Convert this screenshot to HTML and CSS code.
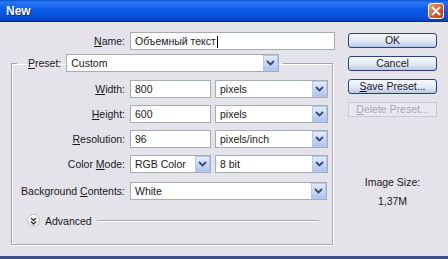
FILE: index.html
```html
<!DOCTYPE html>
<html lang="en">
<head>
    <title>New</title>
    <meta charset="UTF-8">
    <link rel="stylesheet" href="styles.css">
</head>
<body>
<div class="window">
    <div class="titlebar">
        <span class="title">New</span>
        <span class="close">
            <svg width="10" height="10" viewBox="0 0 10 10"><path d="M1 1 L9 9 M9 1 L1 9" stroke="#fff" stroke-width="2" fill="none"/></svg>
        </span>
    </div>
    <div class="content">
        <div class="main">
            <div class="name-row">
                <label class="label name-label"><u>N</u>ame:</label>
                <div class="field name-field">Объемный текст<span class="caret"></span></div>
            </div>
            <fieldset class="group">
                <legend class="preset">
                    <label class="label"><u>P</u>reset:</label>
                    <div class="field select preset-select">Custom<span class="arrow"><svg width="9" height="6" viewBox="0 0 9 6"><path d="M1 1 L4.5 4.5 L8 1" stroke="#3b4a6b" stroke-width="1.8" fill="none"/></svg></span></div>
                </legend>
                <div class="rows">
                    <label class="label"><u>W</u>idth:</label>
                    <div class="field">800</div>
                    <div class="field select">pixels<span class="arrow"><svg width="9" height="6" viewBox="0 0 9 6"><path d="M1 1 L4.5 4.5 L8 1" stroke="#3b4a6b" stroke-width="1.8" fill="none"/></svg></span></div>

                    <label class="label"><u>H</u>eight:</label>
                    <div class="field">600</div>
                    <div class="field select">pixels<span class="arrow"><svg width="9" height="6" viewBox="0 0 9 6"><path d="M1 1 L4.5 4.5 L8 1" stroke="#3b4a6b" stroke-width="1.8" fill="none"/></svg></span></div>

                    <label class="label"><u>R</u>esolution:</label>
                    <div class="field">96</div>
                    <div class="field select">pixels/inch<span class="arrow"><svg width="9" height="6" viewBox="0 0 9 6"><path d="M1 1 L4.5 4.5 L8 1" stroke="#3b4a6b" stroke-width="1.8" fill="none"/></svg></span></div>

                    <label class="label">Color <u>M</u>ode:</label>
                    <div class="field select">RGB Color<span class="arrow"><svg width="9" height="6" viewBox="0 0 9 6"><path d="M1 1 L4.5 4.5 L8 1" stroke="#3b4a6b" stroke-width="1.8" fill="none"/></svg></span></div>
                    <div class="field select">8 bit<span class="arrow"><svg width="9" height="6" viewBox="0 0 9 6"><path d="M1 1 L4.5 4.5 L8 1" stroke="#3b4a6b" stroke-width="1.8" fill="none"/></svg></span></div>

                    <label class="label bg-label">Background <u>C</u>ontents:</label>
                    <div class="field select wide bg-field">White<span class="arrow"><svg width="9" height="6" viewBox="0 0 9 6"><path d="M1 1 L4.5 4.5 L8 1" stroke="#3b4a6b" stroke-width="1.8" fill="none"/></svg></span></div>
                </div>
                <div class="advanced">
                    <span class="adv-icon">
                        <svg width="7" height="8" viewBox="0 0 7 8"><path d="M1 1 L3.5 3.5 L6 1 M1 4.5 L3.5 7 L6 4.5" stroke="#333" stroke-width="1.3" fill="none"/></svg>
                    </span>
                    <span class="adv-text">Advanced</span>
                    <span class="adv-line"></span>
                </div>
            </fieldset>
        </div>
        <div class="side">
            <div class="button">OK</div>
            <div class="button">Cancel</div>
            <div class="button"><u>S</u>ave Preset...</div>
            <div class="button disabled"><u>D</u>elete Preset...</div>
            <div class="size-title">Image Size:</div>
            <div class="size-value">1,37M</div>
        </div>
    </div>
</div>
</body>
</html>
```

FILE: styles.css
```css
body {
    margin: 0;
    font-family: 'Liberation Sans', Arial, sans-serif;
    font-size: 10.5px;
    color: #1a1a1a;
}

.window {
    width: 448px;
    height: 259px;
    background-color: #e4e3ea;
    border-bottom: 3px solid #3b4f8c;
    box-sizing: border-box;
    overflow: hidden;
}

.titlebar {
    height: 22px;
    display: flex;
    align-items: center;
    justify-content: space-between;
    padding: 0 4px 0 6px;
    background: linear-gradient(#0b55d6, #2b77f2 12%, #0a5ce8 45%, #0650d8 80%, #0a3fa8);
    border-bottom: 1px solid #0a2f86;
    box-sizing: border-box;
}
.titlebar .title {
    color: #ffffff;
    font-weight: bold;
    font-size: 12px;
    text-shadow: 1px 1px 0 #0a2a78;
}
.titlebar .close {
    width: 16px;
    height: 16px;
    border: 1px solid #ffffff;
    border-radius: 3px;
    background: linear-gradient(135deg, #f0a080, #e05a30 50%, #c03c18);
    display: flex;
    align-items: center;
    justify-content: center;
    box-sizing: border-box;
}

.content {
    display: flex;
}

.main {
    width: 336px;
    padding-top: 10px;
}

.label {
    text-align: right;
    white-space: nowrap;
}

.field {
    height: 18px;
    line-height: 16px;
    background-color: #ffffff;
    border: 1px solid #a5acb5;
    box-sizing: border-box;
    padding-left: 4px;
    position: relative;
    white-space: nowrap;
}
.field .caret {
    display: inline-block;
    width: 1px;
    height: 12px;
    background-color: #000000;
    vertical-align: middle;
    margin-left: 1px;
}
.select .arrow {
    position: absolute;
    top: 0;
    right: 0;
    width: 15px;
    height: 16px;
    box-sizing: border-box;
    border: 1px solid #b7c8ef;
    background: linear-gradient(#e3ebfc, #c2d3f6 60%, #aec3ef);
    display: flex;
    align-items: center;
    justify-content: center;
}

.name-row {
    display: flex;
    align-items: center;
    gap: 5px;
}
.name-row .name-label {
    width: 125px;
}
.name-row .name-field {
    width: 205px;
}

.group {
    margin: 4px 0 0 11px;
    width: 322px;
    height: 191px;
    padding: 0 0 0 5px;
    border: 1px solid #a9a8b2;
    box-shadow: 1px 1px 0 #ffffff, inset 1px 1px 0 #ffffff;
    box-sizing: border-box;
}
.group .preset {
    display: flex;
    align-items: center;
    gap: 5px;
    padding: 0 4px 0 11px;
}
.group .preset-select {
    width: 213px;
}

.rows {
    display: grid;
    grid-template-columns: 113px 81px 112px;
    grid-auto-rows: 18px;
    column-gap: 5px;
    row-gap: 7px;
    margin-top: 8px;
    margin-left: -5px;
    align-items: center;
}
.rows .field:nth-child(3n) {
    margin-left: -1px;
}
.rows .wide {
    grid-column: span 2;
    width: 197px;
}
.rows .bg-label, .rows .bg-field {
    margin-top: 4px;
}

.advanced {
    display: flex;
    align-items: center;
    margin-top: 16px;
    margin-left: 10px;
    margin-right: 13px;
}
.advanced .adv-icon {
    width: 13px;
    height: 13px;
    border-radius: 50%;
    border: 1px solid #c4c3cc;
    background: linear-gradient(#ffffff, #e6e6ea);
    box-sizing: border-box;
    display: flex;
    align-items: center;
    justify-content: center;
}
.advanced .adv-text {
    margin-left: 5px;
    margin-right: 5px;
}
.advanced .adv-line {
    flex: 1;
    border-top: 1px solid #a9a8b2;
    border-bottom: 1px solid #ffffff;
}

.side {
    width: 89px;
    margin-left: 12px;
    padding-top: 11px;
    display: flex;
    flex-direction: column;
    align-items: stretch;
    text-align: center;
}
.side .button {
    height: 15px;
    line-height: 13px;
    margin-bottom: 8px;
    border: 1px solid #2a3f7e;
    border-radius: 3px;
    background: linear-gradient(#f6f8fd, #e3e9f6 55%, #b9c8e7);
    box-sizing: border-box;
}
.side .button.disabled {
    border-color: #cbcad2;
    border-radius: 0;
    background: #e9e8ee;
    color: #a9a8b0;
    height: 15px;
}
.side .size-title {
    margin-top: 51px;
}
.side .size-value {
    margin-top: 7px;
}
```
